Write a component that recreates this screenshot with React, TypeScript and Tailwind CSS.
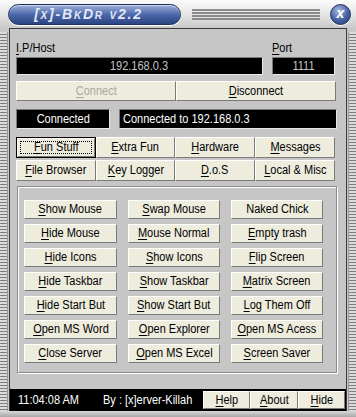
import React from 'react';

const face = 'bg-[#edecdd] border border-t-white border-l-white border-r-[#7a7a7a] border-b-[#7a7a7a]';

// the old dialog font is narrower than anything installed, so squeeze it a little
const Label: React.FC<{ text: string; u?: number; left?: boolean }> = ({ text, u = 0, left }) => (
  <span className={`inline-block whitespace-nowrap scale-x-[0.88] ${left ? 'origin-left' : 'origin-center'}`}>
    {u < 0 ? (
      text
    ) : (
      <>
        {text.slice(0, u)}
        <span className="underline underline-offset-2">{text[u]}</span>
        {text.slice(u + 1)}
      </>
    )}
  </span>
);

const Btn: React.FC<{ text: string; u?: number; className?: string; disabled?: boolean; focused?: boolean }> = ({
  text,
  u = 0,
  className = '',
  disabled,
  focused,
}) => {
  if (focused) {
    return (
      <div className={`border border-black ${className}`}>
        <div className={`${face} h-full flex items-center justify-center p-[2px]`}>
          <div className="h-full w-full border border-dotted border-black flex items-center justify-center">
            <Label text={text} u={u} />
          </div>
        </div>
      </div>
    );
  }
  return (
    <div
      className={`${face} flex items-center justify-center whitespace-nowrap ${disabled ? 'text-[#a8a89c]' : 'text-black'} ${className}`}
    >
      <Label text={text} u={u} />
    </div>
  );
};

const grid: [string, number][] = [
  ['Show Mouse', 0],
  ['Swap Mouse', 0],
  ['Naked Chick', -1],
  ['Hide Mouse', 0],
  ['Mouse Normal', 0],
  ['Empty trash', 0],
  ['Hide Icons', 0],
  ['Show Icons', 0],
  ['Flip Screen', 0],
  ['Hide Taskbar', 0],
  ['Show Taskbar', 0],
  ['Matrix Screen', 0],
  ['Hide Start But', 0],
  ['Show Start But', 0],
  ['Log Them Off', 0],
  ['Open MS Word', 0],
  ['Open Explorer', 0],
  ['Open MS Acess', 0],
  ['Close Server', 0],
  ['Open MS Excel', 0],
  ['Screen Saver', 0],
];

const stripe = 'bg-[repeating-linear-gradient(to_bottom,#dcdcdc_0px,#dcdcdc_2px,#7e7e7e_2px,#7e7e7e_3px)]';
const sunken = 'bg-black border border-t-[#7a7a7a] border-l-[#7a7a7a] border-b-[#e8e8e8] border-r-[#e8e8e8]';

const App: React.FC = () => {
  return (
    <div className="w-[356px] h-[417px] flex flex-col bg-[#c8c8c8] font-['Liberation_Sans','Arial',sans-serif] text-[12.5px] leading-none select-none">
      {/* title bar */}
      <div className="h-[28px] flex items-center bg-gradient-to-b from-[#fbfbfb] via-[#e6e6e6] to-[#c9c9c9]">
        <div className="ml-[8px] w-[173px] h-[21px] rounded-full border border-[#1f2f5c] bg-gradient-to-b from-[#9fb2db] via-[#4d69ab] to-[#2b4482] shadow-[inset_0_1px_0_#c9d5f0,0_1px_0_#ffffff] flex items-center justify-center">
          <span className="-ml-[12px] italic font-bold text-[14px] tracking-[1.8px] text-[#e4e9f7] [font-variant:small-caps]">
            [x]-BkDr v2.2
          </span>
        </div>
        <div className="ml-[11px] w-[128px] flex flex-col gap-[1px]">
          <div className="h-[2px] bg-[#8b8b8b]" />
          <div className="h-[2px] bg-[#8b8b8b]" />
          <div className="h-[2px] bg-[#8b8b8b]" />
          <div className="h-[2px] bg-[#8b8b8b]" />
        </div>
        <div className="ml-[10px] w-[21px] h-[21px] rounded-full border border-[#1f2f5c] bg-[radial-gradient(circle_at_40%_30%,#a9bbe2,#4561a3_55%,#243a73)] flex items-center justify-center shadow-[0_1px_0_#fff]">
          <span className="italic font-bold text-[14px] text-white -mt-[2px]">x</span>
        </div>
      </div>

      {/* body */}
      <div className="flex-1 flex">
        <div className={`w-[8px] ${stripe} border-r border-[#9a9a9a] mt-[4px]`} />
        <div className="w-[1px]" />
        <div className="w-[338px] flex flex-col bg-[#c6c6c6] border-t border-l border-r border-[#3a3a3a]">
          <div className="pl-[6px] pr-[9px] flex-1 flex flex-col">
            <div className="mt-[13px] h-[14px] flex text-black">
              <div className="w-[256px]">
                <Label text="I.P/Host" left />
              </div>
              <div>
                <Label text="Port" left />
              </div>
            </div>
            <div className="mt-[1px] flex h-[18px]">
              <div className={`w-[247px] ${sunken} text-[#c4c4c4] flex items-center justify-center`}>
                <Label text="192.168.0.3" u={-1} />
              </div>
              <div className={`ml-[9px] w-[63px] ${sunken} text-[#c4c4c4] flex items-center justify-center`}>
                <Label text="1111" u={-1} />
              </div>
            </div>
            <div className="mt-[6px] flex h-[20px]">
              <Btn text="Connect" disabled className="w-[160px]" />
              <Btn text="Disconnect" className="w-[160px]" />
            </div>
            <div className="mt-[8px] flex h-[20px] text-white">
              <div className={`w-[94px] ${sunken} flex items-center justify-center`}>
                <Label text="Connected" u={-1} />
              </div>
              <div className={`ml-[9px] w-[218px] ${sunken} flex items-center pl-[3px]`}>
                <Label text="Connected to 192.168.0.3" u={-1} left />
              </div>
            </div>
            <div className="mt-[8px] grid grid-cols-[80px_79px_80px_80px] gap-y-[2px] h-[44px]">
              <Btn text="Fun Stuff" focused className="h-[21px]" />
              <Btn text="Extra Fun" className="h-[21px]" />
              <Btn text="Hardware" className="h-[21px]" />
              <Btn text="Messages" className="h-[21px]" />
              <Btn text="File Browser" className="h-[21px]" />
              <Btn text="Key Logger" className="h-[21px]" />
              <Btn text="D.o.S" className="h-[21px]" />
              <Btn text="Local & Misc" className="h-[21px]" />
            </div>
            <div className="mt-[5px] ml-[1px] w-[320px] h-[187px] border border-[#8a8a8a] shadow-[inset_1px_1px_0_#ffffff,1px_1px_0_#ffffff] pt-[13px] pl-[6px]">
              <div className="grid grid-cols-[93px_92px_92px] gap-x-[11px] gap-y-[5px]">
                {grid.map(([t, u]) => (
                  <Btn key={t} text={t} u={u} className="h-[19px]" />
                ))}
              </div>
            </div>
          </div>
          {/* status bar */}
          <div className="h-[22px] bg-black flex items-center text-white">
            <div className="ml-[8px] w-[85px]">
              <Label text="11:04:08 AM" u={-1} left />
            </div>
            <div className="w-[100px]">
              <Label text="By : [x]erver-Killah" u={-1} left />
            </div>
            <div className="flex h-[18px]">
              <Btn text="Help" className="w-[47px]" />
              <Btn text="About" className="w-[48px]" />
              <Btn text="Hide" className="w-[47px]" />
            </div>
          </div>
        </div>
        <div className="w-[1px]" />
        <div className={`w-[8px] ${stripe} border-l border-[#9a9a9a] mt-[4px]`} />
      </div>

      <div className="h-[6px] bg-gradient-to-b from-[#d8d8d8] to-[#a8a8a8]" />
    </div>
  );
};

export default App;
